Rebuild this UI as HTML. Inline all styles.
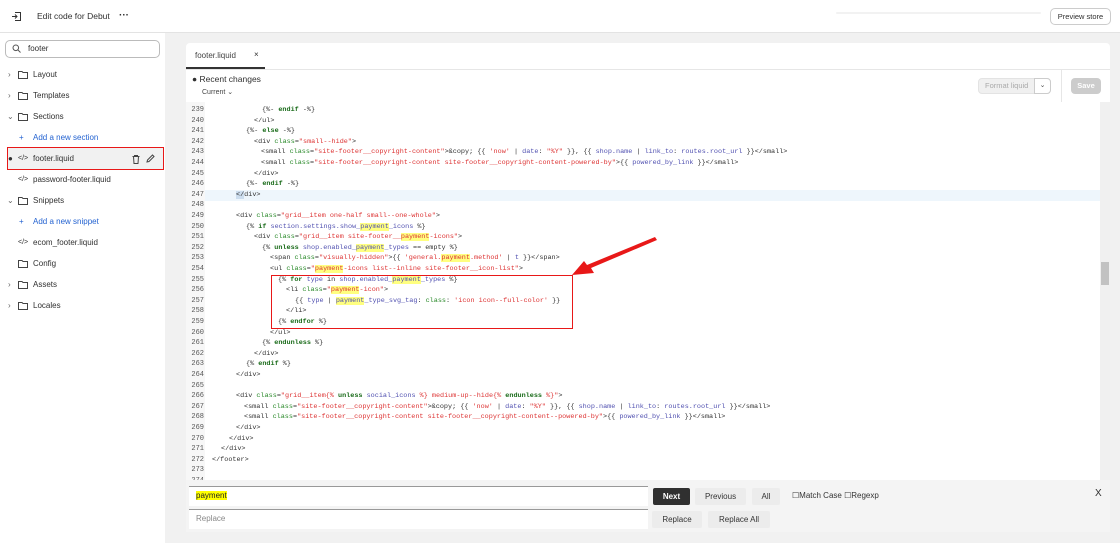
<!DOCTYPE html>
<html><head><meta charset="utf-8"><style>
*{box-sizing:border-box;margin:0;padding:0}
body{width:1120px;height:543px;overflow:hidden;background:#f1f1f1;font-family:"Liberation Sans",sans-serif;position:relative;color:#303030}
.abs{position:absolute}
.top{left:0;top:0;width:1120px;height:33px;background:#fff;border-bottom:1px solid #e3e3e3}
.side{left:0;top:33px;width:165px;height:510px;background:#fff}
.item{position:absolute;left:0;height:20px;font-size:8px;line-height:20px;color:#303030;width:165px}
.code{font-family:"Liberation Mono",monospace;font-size:6.8px;white-space:pre;color:#333}
.ln{position:absolute;left:186px;width:18px;text-align:right;font-family:"Liberation Mono",monospace;font-size:7px;color:#555}
.cl{position:absolute;height:10.6px;line-height:10.6px}
.t{color:#333}.a{color:#2a8a2a}.s{color:#d33}.k{color:#1a6b1a;font-weight:bold}.v{color:#5050b0}.h{background:#ffff80}
.btn{position:absolute;height:17px;font-size:8px;line-height:17px;text-align:center;background:#ececec;border-radius:2px;color:#333}
</style></head><body>
<div class="abs top"></div>
<svg class="abs" style="left:11px;top:11px" width="11" height="11" viewBox="0 0 11 11" fill="none" stroke="#333" stroke-width="1"><path d="M4 1.5h5.5v8H4M1 5.5h5M4 3.5l2 2-2 2"/></svg>
<div class="abs" style="left:37px;top:11px;font-size:8.5px;color:#303030">Edit code for Debut</div>
<div class="abs" style="left:119px;top:11px;font-size:10px;font-weight:bold;line-height:10px">···</div>
<div class="abs" style="left:836px;top:12px;width:205px;height:2px;background:#f2f2f2;border-radius:2px"></div>
<div class="abs" style="left:1050px;top:8px;width:61px;height:17px;border:1px solid #ccc;border-radius:5px;font-size:7.5px;line-height:15px;text-align:center;background:#fff">Preview store</div>

<div class="abs side"></div>
<div class="abs" style="left:5px;top:40px;width:155px;height:18px;border:1px solid #bbb;border-radius:5px;background:#fff"></div>
<svg class="abs" style="left:12px;top:44px" width="9" height="9" viewBox="0 0 9 9" fill="none" stroke="#555" stroke-width="1"><circle cx="3.8" cy="3.8" r="2.8"/><path d="M6 6l2.5 2.5"/></svg>
<div class="abs" style="left:28px;top:44px;font-size:8px">footer</div>

<div class="item" style="top:65px"><span style="position:absolute;left:8px;color:#666">›</span><svg style="position:absolute;left:18px;top:6px" width="10" height="8" viewBox="0 0 10 8" fill="none" stroke="#444"><path d="M.5.5h3.5l1 1h4.5v6H.5z"/></svg><span style="position:absolute;left:33px">Layout</span></div>
<div class="item" style="top:86px"><span style="position:absolute;left:8px;color:#666">›</span><svg style="position:absolute;left:18px;top:6px" width="10" height="8" viewBox="0 0 10 8" fill="none" stroke="#444"><path d="M.5.5h3.5l1 1h4.5v6H.5z"/></svg><span style="position:absolute;left:33px">Templates</span></div>
<div class="item" style="top:107px"><span style="position:absolute;left:7px;color:#666">⌄</span><svg style="position:absolute;left:18px;top:6px" width="10" height="8" viewBox="0 0 10 8" fill="none" stroke="#444"><path d="M.5.5h3.5l1 1h4.5v6H.5z"/></svg><span style="position:absolute;left:33px">Sections</span></div>
<div class="item" style="top:128px;color:#2463d1"><span style="position:absolute;left:19px">+</span><span style="position:absolute;left:33px">Add a new section</span></div>
<div class="abs" style="left:7px;top:147px;width:157px;height:23px;border:1.5px solid #e81818;background:#f1f1f1"></div>
<div class="item" style="top:149px"><span style="position:absolute;left:8px;top:0;font-size:8px">●</span><span style="position:absolute;left:18px;font-size:7px">&lt;/&gt;</span><span style="position:absolute;left:33px">footer.liquid</span>
<svg style="position:absolute;left:132px;top:6px" width="8" height="9" viewBox="0 0 8 9" fill="none" stroke="#444"><path d="M.5 1.5h7M2.5 1.5V.5h3v1M1.5 1.5l.5 7h4l.5-7"/></svg>
<svg style="position:absolute;left:146px;top:5px" width="9" height="9" viewBox="0 0 9 9" fill="none" stroke="#444"><path d="M1 8l.5-2L6.5 1l1.5 1.5L3 7.5z"/></svg></div>
<div class="item" style="top:170px"><span style="position:absolute;left:18px;font-size:7px">&lt;/&gt;</span><span style="position:absolute;left:33px">password-footer.liquid</span></div>
<div class="item" style="top:191px"><span style="position:absolute;left:7px;color:#666">⌄</span><svg style="position:absolute;left:18px;top:6px" width="10" height="8" viewBox="0 0 10 8" fill="none" stroke="#444"><path d="M.5.5h3.5l1 1h4.5v6H.5z"/></svg><span style="position:absolute;left:33px">Snippets</span></div>
<div class="item" style="top:212px;color:#2463d1"><span style="position:absolute;left:19px">+</span><span style="position:absolute;left:33px">Add a new snippet</span></div>
<div class="item" style="top:233px"><span style="position:absolute;left:18px;font-size:7px">&lt;/&gt;</span><span style="position:absolute;left:33px">ecom_footer.liquid</span></div>
<div class="item" style="top:254px"><svg style="position:absolute;left:18px;top:6px" width="10" height="8" viewBox="0 0 10 8" fill="none" stroke="#444"><path d="M.5.5h3.5l1 1h4.5v6H.5z"/></svg><span style="position:absolute;left:33px">Config</span></div>
<div class="item" style="top:275px"><span style="position:absolute;left:8px;color:#666">›</span><svg style="position:absolute;left:18px;top:6px" width="10" height="8" viewBox="0 0 10 8" fill="none" stroke="#444"><path d="M.5.5h3.5l1 1h4.5v6H.5z"/></svg><span style="position:absolute;left:33px">Assets</span></div>
<div class="item" style="top:296px"><span style="position:absolute;left:8px;color:#666">›</span><svg style="position:absolute;left:18px;top:6px" width="10" height="8" viewBox="0 0 10 8" fill="none" stroke="#444"><path d="M.5.5h3.5l1 1h4.5v6H.5z"/></svg><span style="position:absolute;left:33px">Locales</span></div>

<!-- editor card -->
<div class="abs" style="left:186px;top:43px;width:924px;height:437px;background:#fff;border-radius:4px 4px 0 0"></div>
<div class="abs" style="left:186px;top:69px;width:924px;height:1px;background:#e6e6e6"></div>
<div class="abs" style="left:186px;top:67px;width:79px;height:2px;background:#333"></div>
<div class="abs" style="left:195px;top:51px;font-size:8px;color:#444">footer.liquid</div>
<div class="abs" style="left:254px;top:50px;font-size:8px">×</div>
<div class="abs" style="left:192px;top:74px;font-size:8.5px">● Recent changes</div>
<div class="abs" style="left:202px;top:88px;font-size:7px;color:#444">Current ⌄</div>
<div class="abs" style="left:1061px;top:70px;width:1px;height:32px;background:#e6e6e6"></div>
<div class="abs" style="left:978px;top:78px;width:73px;height:16px;background:#f0f0f0;border:1px solid #e3e3e3;border-radius:4px;font-size:7.5px;line-height:14px;color:#aaa;padding-left:6px">Format liquid</div>
<div class="abs" style="left:1034px;top:78px;width:17px;height:16px;background:#fff;border:1px solid #ccc;border-radius:0 4px 4px 0;font-size:7px;line-height:14px;text-align:center;color:#555">⌄</div>
<div class="abs" style="left:1071px;top:78px;width:30px;height:16px;background:#ccc;border-radius:4px;font-size:7.5px;line-height:16px;text-align:center;color:#fff;font-weight:bold">Save</div>
<div class="abs" style="left:186px;top:102px;width:19px;height:378px;background:#f7f7f7"></div>
<div class="abs" style="left:205px;top:190px;width:895px;height:10.6px;background:#eef6fc"></div>
<div class="abs" style="left:1100px;top:102px;width:10px;height:378px;background:#f0f0f0"></div>
<div class="abs" style="left:1101px;top:262px;width:8px;height:23px;background:#c2c2c2"></div>

<div class="code" id="code"></div>
<script>
var L=[
[239,262,'<span class="t">{%- </span><span class="k">endif</span><span class="t"> -%}</span>'],
[240,254,'&lt;/ul&gt;'],
[241,246,'{%- <span class="k">else</span> -%}'],
[242,254,'&lt;div <span class="a">class</span>=<span class="s">"small--hide"</span>&gt;'],
[243,261,'&lt;small <span class="a">class</span>=<span class="s">"site-footer__copyright-content"</span>&gt;&amp;copy; {{ <span class="s">\'now\'</span> | <span class="v">date</span>: <span class="s">"%Y"</span> }}, {{ <span class="v">shop.name</span> | <span class="v">link_to</span>: <span class="v">routes.root_url</span> }}&lt;/small&gt;'],
[244,261,'&lt;small <span class="a">class</span>=<span class="s">"site-footer__copyright-content site-footer__copyright-content-powered-by"</span>&gt;{{ <span class="v">powered_by_link</span> }}&lt;/small&gt;'],
[245,254,'&lt;/div&gt;'],
[246,246,'{%- <span class="k">endif</span> -%}'],
[247,236,'<span style="background:#cde">&lt;/</span>div&gt;'],
[248,0,''],
[249,236,'&lt;div <span class="a">class</span>=<span class="s">"grid__item one-half small--one-whole"</span>&gt;'],
[250,246,'{% <span class="k">if</span> <span class="v">section.settings.show_<span class="h">payment</span>_icons</span> %}'],
[251,254,'&lt;div <span class="a">class</span>=<span class="s">"grid__item site-footer__<span class="h">payment</span>-icons"</span>&gt;'],
[252,262,'{% <span class="k">unless</span> <span class="v">shop.enabled_<span class="h">payment</span>_types</span> == empty %}'],
[253,270,'&lt;span <span class="a">class</span>=<span class="s">"visually-hidden"</span>&gt;{{ <span class="s">\'general.<span class="h">payment</span>.method\'</span> | <span class="v">t</span> }}&lt;/span&gt;'],
[254,270,'&lt;ul <span class="a">class</span>=<span class="s">"<span class="h">payment</span>-icons list--inline site-footer__icon-list"</span>&gt;'],
[255,278,'{% <span class="k">for</span> <span class="v">type</span> in <span class="v">shop.enabled_<span class="h">payment</span>_types</span> %}'],
[256,286,'&lt;li <span class="a">class</span>=<span class="s">"<span class="h">payment</span>-icon"</span>&gt;'],
[257,295,'{{ <span class="v">type</span> | <span class="v"><span class="h">payment</span>_type_svg_tag</span>: <span class="a">class</span>: <span class="s">\'icon icon--full-color\'</span> }}'],
[258,286,'&lt;/li&gt;'],
[259,278,'{% <span class="k">endfor</span> %}'],
[260,270,'&lt;/ul&gt;'],
[261,262,'{% <span class="k">endunless</span> %}'],
[262,254,'&lt;/div&gt;'],
[263,246,'{% <span class="k">endif</span> %}'],
[264,236,'&lt;/div&gt;'],
[265,0,''],
[266,236,'&lt;div <span class="a">class</span>=<span class="s">"grid__item{% <span class="k">unless</span> <span class="v">social_icons</span> %} medium-up--hide{% <span class="k">endunless</span> %}"</span>&gt;'],
[267,244,'&lt;small <span class="a">class</span>=<span class="s">"site-footer__copyright-content"</span>&gt;&amp;copy; {{ <span class="s">\'now\'</span> | <span class="v">date</span>: <span class="s">"%Y"</span> }}, {{ <span class="v">shop.name</span> | <span class="v">link_to</span>: <span class="v">routes.root_url</span> }}&lt;/small&gt;'],
[268,244,'&lt;small <span class="a">class</span>=<span class="s">"site-footer__copyright-content site-footer__copyright-content--powered-by"</span>&gt;{{ <span class="v">powered_by_link</span> }}&lt;/small&gt;'],
[269,236,'&lt;/div&gt;'],
[270,229,'&lt;/div&gt;'],
[271,221,'&lt;/div&gt;'],
[272,212,'&lt;/footer&gt;'],
[273,0,''],[274,0,'']];
var h='';L.forEach(function(r,i){var y=105+i*10.6;
h+='<div class="ln" style="top:'+y+'px;line-height:10.6px">'+r[0]+'</div>';
if(r[2])h+='<div class="cl" style="left:'+r[1]+'px;top:'+y+'px">'+r[2]+'</div>';});
document.getElementById('code').innerHTML=h;
</script>
<div class="abs" style="left:271px;top:275px;width:302px;height:54px;border:1.5px solid #e81818"></div>
<svg class="abs" style="left:560px;top:232px" width="100" height="50" viewBox="0 0 100 50"><path d="M95 5L97 8L31 36L34 41L12 43L24 29L27 33Z" fill="#e81818"/></svg>

<!-- find panel -->
<div class="abs" style="left:186px;top:480px;width:924px;height:52px;background:#f4f4f4"></div>
<div class="abs" style="left:189px;top:486px;width:459px;height:20px;background:#fff;border-top:1px solid #999"></div>
<div class="abs" style="left:196px;top:491px;font-size:8px;background:#ffff00;color:#222">payment</div>
<div class="abs" style="left:189px;top:509px;width:459px;height:20px;background:#fff;border-top:1px solid #999"></div>
<div class="abs" style="left:196px;top:514px;font-size:8px;color:#888">Replace</div>
<div class="btn" style="left:653px;top:488px;width:37px;background:#303030;color:#fff;font-weight:bold">Next</div>
<div class="btn" style="left:695px;top:488px;width:51px">Previous</div>
<div class="btn" style="left:752px;top:488px;width:28px">All</div>
<div class="abs" style="left:792px;top:491px;font-size:8px;color:#333">☐Match Case ☐Regexp</div>
<div class="abs" style="left:1095px;top:488px;font-size:10px">X</div>
<div class="btn" style="left:652px;top:511px;width:50px">Replace</div>
<div class="btn" style="left:708px;top:511px;width:62px">Replace All</div>
</body></html>
